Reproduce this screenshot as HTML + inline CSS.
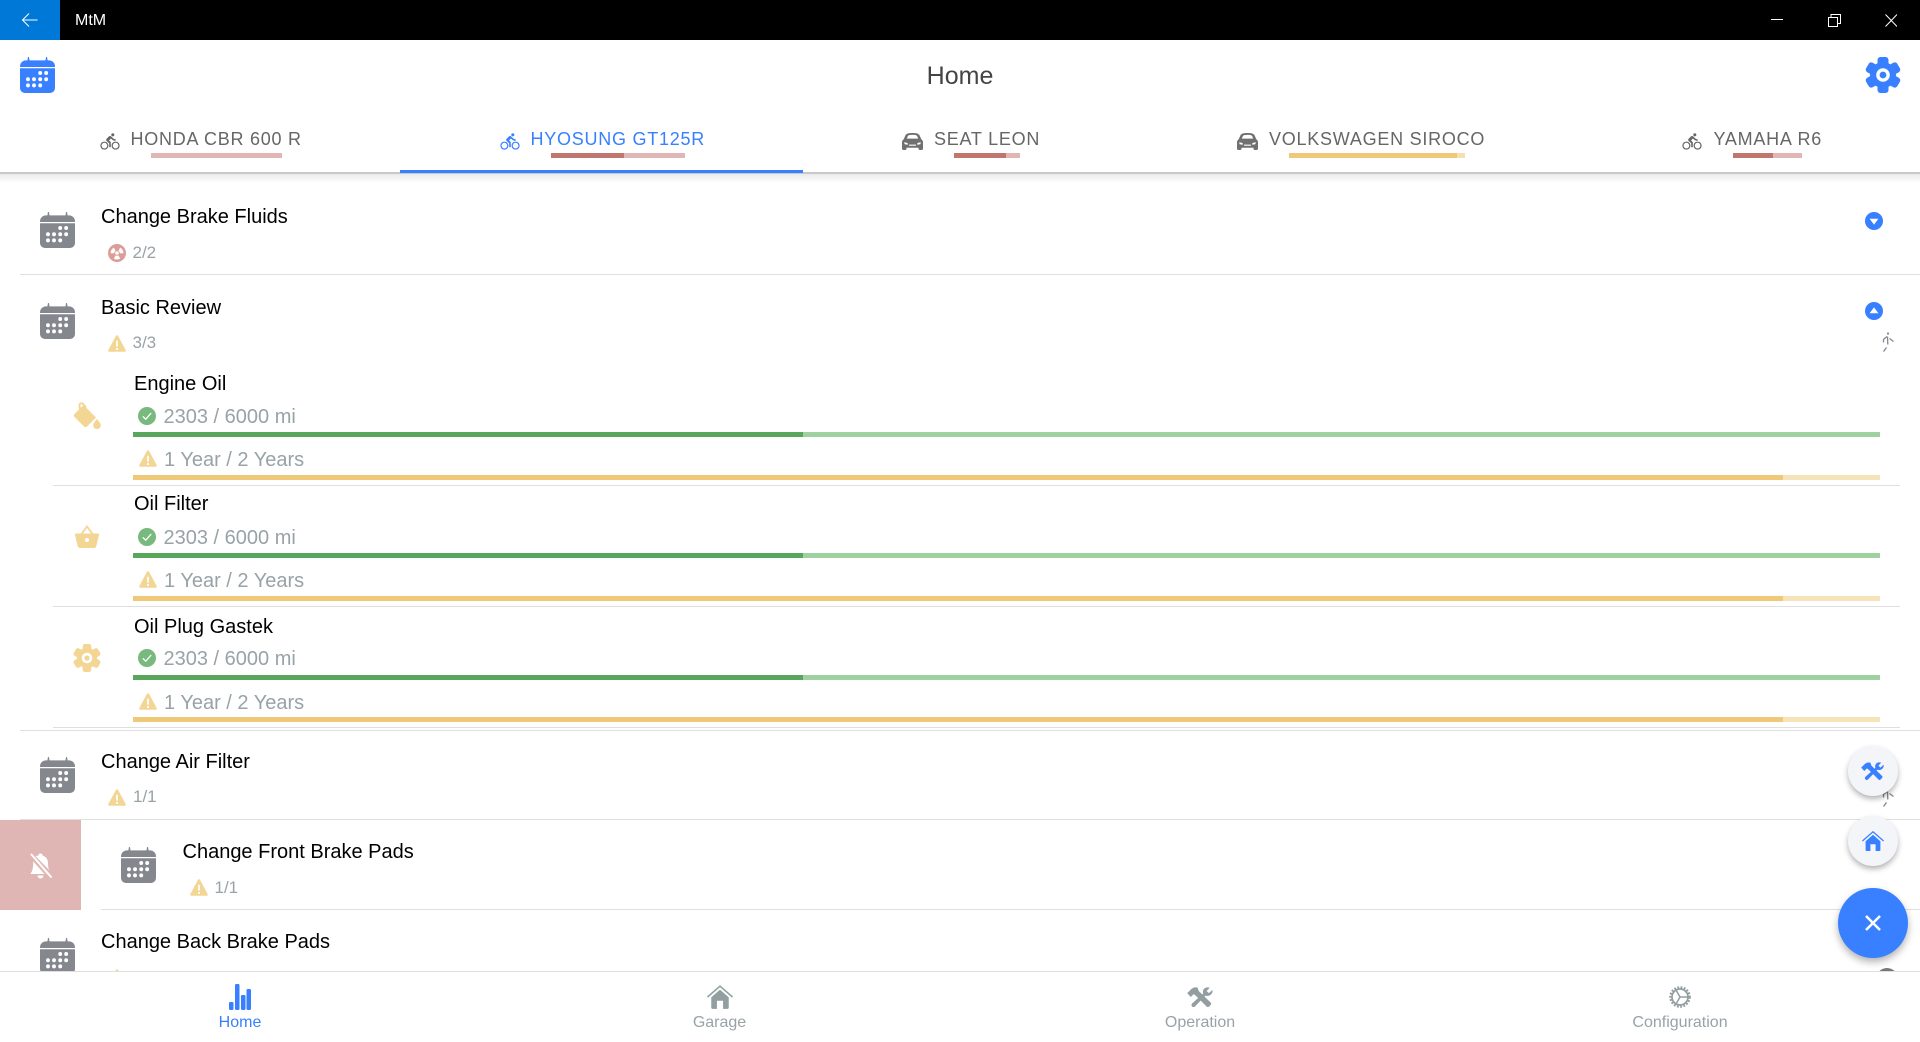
<!DOCTYPE html>
<html lang="en">
<head>
<meta charset="utf-8">
<title>MtM</title>
<style>
html,body{margin:0;padding:0;background:#fff}
body{width:1920px;height:1042px;position:relative;overflow:hidden;font-family:"Liberation Sans",Arial,sans-serif;color:#000;filter:blur(.3px)}
.a,.t,svg.i{position:absolute}
.t{white-space:nowrap;line-height:30px;height:30px}
.h{font-size:20px;color:#000}
.s{font-size:20px;color:#98a3a7}
.n{font-size:17px;color:#98a3a7}
.tab{font-size:18px;letter-spacing:.75px;color:#666}
.nav{font-size:16px;color:#98a3a7;transform:translateX(-50%)}
.sep{position:absolute;height:1px;background:#dfdfdf}
.cal{color:#85878e}
.y{color:#f3d594}
</style>
</head>
<body>
<svg width="0" height="0" style="position:absolute">
<defs>
<symbol id="cal" viewBox="0 0 36 36" preserveAspectRatio="none">
<path fill="currentColor" d="M6 3.4h1.6L8.2 0h1L9.8 3.4H26.2L26.800 0h1L28.400 3.4H30a6 6 0 0 1 6 6V10H0V9.4a6 6 0 0 1 6-6Z"/>
<path fill="currentColor" d="M0 11.2H36V31a5 5 0 0 1-5 5H5a5 5 0 0 1-5-5Z"/>
<g fill="#fff"><circle cx="20.800" cy="16" r="2"/><circle cx="26.900" cy="16" r="2"/><circle cx="8.200" cy="22.200" r="2"/><circle cx="14.400" cy="22.200" r="2"/><circle cx="20.800" cy="22.200" r="2"/><circle cx="26.900" cy="22.200" r="2"/><circle cx="8.200" cy="28.400" r="2"/><circle cx="14.400" cy="28.400" r="2"/><circle cx="20.800" cy="28.400" r="2"/></g>
</symbol>
<symbol id="gear" viewBox="0 0 36 36">
<g fill="currentColor"><circle cx="18" cy="18" r="13"/><rect x="12.500" y="0" width="11" height="36" rx="3"/><rect x="12.500" y="0" width="11" height="36" rx="3" transform="rotate(60 18 18)"/><rect x="12.500" y="0" width="11" height="36" rx="3" transform="rotate(120 18 18)"/></g>
<circle cx="18" cy="18" r="6.800" fill="#fff"/><circle cx="18" cy="18" r="3.400" fill="currentColor"/>
</symbol>
<symbol id="bike" viewBox="0 0 24 22.500">
<path fill="currentColor" d="M15.500 5.500c1.100 0 2-.9 2-2s-.9-2-2-2-2 .9-2 2 .9 2 2 2zM5 12c-2.800 0-5 2.200-5 5s2.200 5 5 5 5-2.200 5-5-2.200-5-5-5zm0 8.500c-1.900 0-3.500-1.600-3.500-3.500s1.600-3.500 3.500-3.500 3.500 1.600 3.500 3.500-1.600 3.500-3.500 3.500zm5.800-10l2.400-2.400.8.800c1.300 1.300 3 2.100 5.100 2.100V9c-1.500 0-2.700-.6-3.600-1.500l-1.900-1.900c-.5-.4-1-.6-1.600-.6s-1.100.2-1.400.6L7.800 8.400c-.4.400-.6.900-.6 1.400 0 .6.200 1.100.6 1.400L11 14v5h2v-6.200l-2.200-2.300zM19 12c-2.800 0-5 2.200-5 5s2.200 5 5 5 5-2.200 5-5-2.200-5-5-5zm0 8.500c-1.900 0-3.500-1.600-3.500-3.500s1.600-3.500 3.500-3.500 3.500 1.600 3.500 3.500-1.600 3.500-3.500 3.500z"/>
</symbol>
<symbol id="car" viewBox="0 0 21 17">
<path fill="currentColor" fill-rule="evenodd" d="M10.500 0C14.500 0 16.800.6 17.700 2.600L19.300 6.200C20.400 7 21 8 21 9.200V15.500a1.500 1.500 0 0 1-1.500 1.500H18a1.500 1.500 0 0 1-1.500-1.500V14.800H4.500V15.500A1.500 1.500 0 0 1 3 17H1.500A1.500 1.500 0 0 1 0 15.500V9.200C0 8 .6 7 1.700 6.200L3.300 2.600C4.200.6 6.500 0 10.500 0ZM4.800 5.600H16.200L15.200 3.200C14.700 2.200 13.200 1.900 10.500 1.900S6.300 2.200 5.800 3.200ZM2.200 9.200 2.600 11.200 5.800 11.800 5.600 10ZM18.800 9.200 15.400 10 15.200 11.800 18.400 11.200ZM7 11.600V12.800H14V11.600Z"/>
</symbol>
<symbol id="warn" viewBox="0 0 18 17">
<path fill="currentColor" d="M9 .2c.4 0 .8.2 1 .6l7.700 14.300c.4.800-.1 1.700-1 1.700H1.300c-.9 0-1.400-.9-1-1.700L8 .8c.2-.4.600-.6 1-.6Z"/>
<rect x="8.100" y="5.600" width="1.800" height="6.200" rx=".8" fill="#fff"/><circle cx="9" cy="14" r="1.100" fill="#fff"/>
</symbol>
<symbol id="ok" viewBox="0 0 18 18">
<circle cx="9" cy="9" r="9" fill="#78b97e"/><path d="M4.800 9.400 7.800 12.200 13.200 6" fill="none" stroke="#fff" stroke-width="1.300"/>
</symbol>
<symbol id="rad" viewBox="0 0 18 18">
<circle cx="9" cy="9" r="9" fill="#dc9d98"/>
<g fill="#fff"><circle cx="9" cy="9" r="1.800"/><path d="M6.300 9.200H2.600A6.400 6.400 0 0 1 5.800 3.600L7.600 6.800A2.800 2.800 0 0 0 6.300 9.200Z"/><path d="M11.700 9.200H15.400A6.400 6.400 0 0 0 12.200 3.600L10.400 6.800A2.800 2.800 0 0 1 11.700 9.200Z"/><path d="M7.600 11.400 5.800 14.600A6.400 6.400 0 0 0 12.200 14.600L10.400 11.400A2.800 2.800 0 0 1 7.600 11.400Z"/></g>
</symbol>
<symbol id="tools" viewBox="0 0 24 18">
<g fill="currentColor">
<path d="M9.300 0.600C6.500.1 4.400 1 2.800 3L.2 5.600 3.300 9 6 6.400 8 8 17.500 17.500a1.500 1.500 0 0 0 2.200-.1L21 16a1.500 1.500 0 0 0 0-2.100L10.500 3.800Z"/>
<path d="M22.500 2.800 19.500 5.600 17.400 3.700 20.200.8C17.800-.2 15 .8 14.300 3.200c-.3.900-.2 1.900.1 2.700L4.500 14.800a1.800 1.800 0 0 0 2.600 2.600L16.300 7.800c2.600.8 5.300-.4 6.200-2.800.3-.7.300-1.500 0-2.200Z"/>
</g>
</symbol>
<symbol id="home" viewBox="0 0 22 20">
<path fill="none" stroke="currentColor" stroke-width="1.300" d="M.4 10 11 .8 21.600 10"/>
<path fill="currentColor" d="M3.600 10.300 11 3.800 18.400 10.300V19a1 1 0 0 1-1 1H13.600V13.200H8.400V20H4.600a1 1 0 0 1-1-1Z"/>
</symbol>
<symbol id="cfg" viewBox="0 0 22 22">
<circle cx="11" cy="11" r="9.600" fill="none" stroke="currentColor" stroke-width="2.400" stroke-dasharray="1.800 1.450"/>
<circle cx="11" cy="11" r="8" fill="none" stroke="currentColor" stroke-width="1.700"/>
<path d="M11 11 7.400 4.600M11 11 7.400 17.400M11 11H18.800" stroke="currentColor" stroke-width="1.500" fill="none"/>
</symbol>
<symbol id="walk" viewBox="0 0 12 20">
<g fill="none" stroke="currentColor" stroke-width="1.300"><circle cx="6" cy="1.500" r="1.100" fill="currentColor" stroke="none"/><path d="M5 4.500 1.500 7.500 1.500 10.500M5.500 4.500 5.800 12.500M7.500 6.500 11.500 9.500"/><path d="M4.500 15.500 1.500 19.500"/></g>
</symbol>
</defs>
</svg>

<!-- title bar -->
<div class="a" style="left:0;top:0;width:1920px;height:40px;background:#000"></div>
<div class="a" style="left:0;top:0;width:60px;height:40px;background:#0078d7"></div>
<svg class="i" style="left:21px;top:12px" width="17" height="16" viewBox="0 0 17 16"><path d="M8 1.500 1.500 8 8 14.500M1.500 8H16.500" fill="none" stroke="#fff" stroke-width="1"/></svg>
<div class="t" style="left:75px;top:6px;font-size:16px;color:#fff">MtM</div>
<svg class="i" style="left:1771px;top:14px" width="126" height="13" viewBox="0 0 126 13"><path d="M0 5.500H12" stroke="#fff" stroke-width="1"/><path d="M57.500 3.500H66.500V12.500H57.500ZM60 3.500V.5H69.500V9.500H66.500" fill="none" stroke="#fff" stroke-width="1"/><path d="M114.500.5 126 12.500M126 .5 114.500 12.500" stroke="#fff" stroke-width="1"/></svg>

<!-- header -->
<svg class="i" style="left:20px;top:57px;color:#3880ff" width="35" height="36"><use href="#cal" width="35" height="36"/></svg>
<div class="t" style="left:860px;width:200px;top:61px;text-align:center;font-size:25px;color:#444">Home</div>
<svg class="i" style="left:1865px;top:57px;color:#3880ff" width="36" height="36"><use href="#gear"/></svg>

<!-- tabs -->
<div class="a" style="left:0;top:172px;width:1920px;height:2px;background:#c9c9c9"></div>
<div class="a" style="left:0;top:174px;width:1920px;height:9px;background:linear-gradient(#eaeaea,#fff)"></div>
<div class="a" style="left:400px;top:170px;width:403px;height:3px;background:#3880ff"></div>

<svg class="i" style="left:100px;top:132px;color:#666" width="20" height="18"><use href="#bike"/></svg>
<div class="t tab" style="left:130.500px;top:124px">HONDA CBR 600 R</div>
<div class="a" style="left:151px;top:153px;width:131px;height:5px;background:#dfb6b3"></div>

<svg class="i" style="left:500px;top:132px;color:#3880ff" width="20" height="18"><use href="#bike"/></svg>
<div class="t tab" style="left:530.500px;top:124px;color:#3880ff">HYOSUNG GT125R</div>
<div class="a" style="left:551px;top:153px;width:134px;height:5px;background:#dfb6b3"></div>
<div class="a" style="left:551px;top:153px;width:73px;height:5px;background:#c0756f"></div>

<svg class="i" style="left:902px;top:133px;color:#707070" width="21" height="17"><use href="#car"/></svg>
<div class="t tab" style="left:934px;top:124px">SEAT LEON</div>
<div class="a" style="left:954px;top:153px;width:66px;height:5px;background:#dfb6b3"></div>
<div class="a" style="left:954px;top:153px;width:52px;height:5px;background:#c0756f"></div>

<svg class="i" style="left:1237px;top:133px;color:#707070" width="21" height="17"><use href="#car"/></svg>
<div class="t tab" style="left:1269px;top:124px">VOLKSWAGEN SIROCO</div>
<div class="a" style="left:1289px;top:153px;width:176px;height:5px;background:#f6e0b0"></div>
<div class="a" style="left:1289px;top:153px;width:168px;height:5px;background:#efc878"></div>

<svg class="i" style="left:1682px;top:132px;color:#666" width="20" height="18"><use href="#bike"/></svg>
<div class="t tab" style="left:1713.500px;top:124px">YAMAHA R6</div>
<div class="a" style="left:1733px;top:153px;width:69px;height:5px;background:#dfb6b3"></div>
<div class="a" style="left:1733px;top:153px;width:40px;height:5px;background:#c0756f"></div>

<!-- item 1 -->
<svg class="i cal" style="left:40px;top:212px" width="35" height="36"><use href="#cal" width="35" height="36"/></svg>
<div class="t h" style="left:101px;top:202px">Change Brake Fluids</div>
<svg class="i" style="left:108px;top:244px" width="18" height="18"><use href="#rad"/></svg>
<div class="t n" style="left:132.500px;top:238px">2/2</div>
<svg class="i" style="left:1865px;top:212px" width="18" height="18" viewBox="0 0 18 18"><circle cx="9" cy="9" r="9" fill="#3880ff"/><path d="M4.600 6.800H13.400L9 12.600Z" fill="#fff"/></svg>
<div class="sep" style="left:20px;top:274px;width:1900px"></div>

<!-- item 2 -->
<svg class="i cal" style="left:40px;top:303px" width="35" height="36"><use href="#cal" width="35" height="36"/></svg>
<div class="t h" style="left:101px;top:293px">Basic Review</div>
<svg class="i y" style="left:108px;top:335px" width="18" height="17"><use href="#warn"/></svg>
<div class="t n" style="left:132.500px;top:328px">3/3</div>
<svg class="i" style="left:1865px;top:302px" width="18" height="18" viewBox="0 0 18 18"><circle cx="9" cy="9" r="9" fill="#3880ff"/><path d="M4.600 11.200H13.400L9 5.400Z" fill="#fff"/></svg>
<svg class="i" style="left:1882px;top:332px;color:#85878e" width="12" height="20"><use href="#walk"/></svg>

<!-- engine oil -->
<svg class="i y" style="left:73px;top:402px" width="28" height="27" viewBox="0 0 28 27"><g fill="currentColor"><path d="M1.500 12 10.500 3 23 15.500 14 24.500a2 2 0 0 1-2.800.1L1.300 14.700a2 2 0 0 1 .2-2.700Z"/><path d="M24 17c1.800 2.400 3.800 4.200 3.800 6.300a3.800 3.800 0 0 1-7.600 0c0-2.100 2-3.900 3.800-6.300Z"/></g><path d="M7 8 6.500 3.600A2 2 0 0 1 10 2L13 5.500" fill="none" stroke="currentColor" stroke-width="2"/></svg>
<div class="t h" style="left:134px;top:369px">Engine Oil</div>
<svg class="i" style="left:138px;top:407px" width="18" height="18"><use href="#ok"/></svg>
<div class="t s" style="left:163.500px;top:402px">2303 / 6000 mi</div>
<div class="a" style="left:133px;top:432px;width:1747px;height:5px;background:#9fd09f"></div>
<div class="a" style="left:133px;top:432px;width:670px;height:5px;background:#57a65a"></div>
<svg class="i y" style="left:139px;top:450px" width="18" height="17"><use href="#warn"/></svg>
<div class="t s" style="left:164px;top:444.500px">1 Year / 2 Years</div>
<div class="a" style="left:133px;top:475px;width:1747px;height:5px;background:#f7e3b8"></div>
<div class="a" style="left:133px;top:475px;width:1650px;height:5px;background:#efc878"></div>
<div class="sep" style="left:53px;top:485px;width:1847px"></div>

<!-- oil filter -->
<svg class="i y" style="left:75px;top:525px" width="24" height="23" viewBox="0 0 24 23"><path fill="currentColor" fill-rule="evenodd" d="M1 8.500H23a1 1 0 0 1 1 1.200L21.500 20.500A3 3 0 0 1 18.600 23H5.400A3 3 0 0 1 2.500 20.500L0 9.700A1 1 0 0 1 1 8.500ZM12 13a2 2 0 1 0 0 4 2 2 0 0 0 0-4Z"/><path d="M6.500 9 12 1.500 17.500 9" fill="none" stroke="currentColor" stroke-width="1.800"/></svg>
<div class="t h" style="left:134px;top:489px">Oil Filter</div>
<svg class="i" style="left:138px;top:528px" width="18" height="18"><use href="#ok"/></svg>
<div class="t s" style="left:163.500px;top:523px">2303 / 6000 mi</div>
<div class="a" style="left:133px;top:553px;width:1747px;height:5px;background:#9fd09f"></div>
<div class="a" style="left:133px;top:553px;width:670px;height:5px;background:#57a65a"></div>
<svg class="i y" style="left:139px;top:571px" width="18" height="17"><use href="#warn"/></svg>
<div class="t s" style="left:164px;top:566px">1 Year / 2 Years</div>
<div class="a" style="left:133px;top:596px;width:1747px;height:5px;background:#f7e3b8"></div>
<div class="a" style="left:133px;top:596px;width:1650px;height:5px;background:#efc878"></div>
<div class="sep" style="left:53px;top:606px;width:1847px"></div>

<!-- oil plug -->
<svg class="i y" style="left:73px;top:644px" width="28" height="28"><use href="#gear"/></svg>
<div class="t h" style="left:134px;top:612px">Oil Plug Gastek</div>
<svg class="i" style="left:138px;top:649px" width="18" height="18"><use href="#ok"/></svg>
<div class="t s" style="left:163.500px;top:644px">2303 / 6000 mi</div>
<div class="a" style="left:133px;top:675px;width:1747px;height:5px;background:#9fd09f"></div>
<div class="a" style="left:133px;top:675px;width:670px;height:5px;background:#57a65a"></div>
<svg class="i y" style="left:139px;top:693px" width="18" height="17"><use href="#warn"/></svg>
<div class="t s" style="left:164px;top:687.500px">1 Year / 2 Years</div>
<div class="a" style="left:133px;top:717px;width:1747px;height:5px;background:#f7e3b8"></div>
<div class="a" style="left:133px;top:717px;width:1650px;height:5px;background:#efc878"></div>
<div class="sep" style="left:53px;top:727px;width:1847px"></div>
<div class="sep" style="left:20px;top:730px;width:1900px"></div>

<!-- air filter -->
<svg class="i cal" style="left:40px;top:757px" width="35" height="36"><use href="#cal" width="35" height="36"/></svg>
<div class="t h" style="left:101px;top:747px">Change Air Filter</div>
<svg class="i y" style="left:108px;top:789px" width="18" height="17"><use href="#warn"/></svg>
<div class="t n" style="left:133px;top:782px">1/1</div>
<svg class="i" style="left:1882px;top:787px;color:#85878e" width="12" height="20"><use href="#walk"/></svg>
<div class="sep" style="left:20px;top:819px;width:1900px"></div>

<!-- front brake pads (swiped) -->
<div class="a" style="left:0;top:820px;width:81px;height:90px;background:#dfb6b3"></div>
<svg class="i" style="left:28px;top:851px" width="26" height="28" viewBox="0 0 26 28"><path fill="#fff" d="M12.500 2.500a2 2 0 0 1 2 2c3.600 1 5.500 4 5.500 7.500 0 3 .4 6 1.500 7.500l-14-14.500C8.800 4.800 9.600 4.800 10.500 4.500a2 2 0 0 1 2-2ZM5.200 9 18.800 23H2.600C3 21.500 5.200 20 5.200 12ZM9.500 24.500h6a3 3 0 0 1-6 0Z"/><path d="M3 3 23.500 26.500" stroke="#fff" stroke-width="2"/><path d="M1.500 5 21 27" stroke="#dfb6b3" stroke-width="1.500"/></svg>
<svg class="i cal" style="left:121px;top:847px" width="35" height="36"><use href="#cal" width="35" height="36"/></svg>
<div class="t h" style="left:182.500px;top:837px">Change Front Brake Pads</div>
<svg class="i y" style="left:190px;top:879px" width="18" height="17"><use href="#warn"/></svg>
<div class="t n" style="left:214.500px;top:873px">1/1</div>
<div class="sep" style="left:101px;top:909px;width:1819px"></div>

<!-- back brake pads -->
<svg class="i cal" style="left:40px;top:938px" width="35" height="36"><use href="#cal" width="35" height="36"/></svg>
<div class="t h" style="left:101px;top:927px">Change Back Brake Pads</div>
<svg class="i y" style="left:108px;top:969px" width="18" height="17"><use href="#warn"/></svg>
<div class="a" style="left:1876px;top:968px;width:22px;height:22px;border-radius:50%;background:#777"></div>

<!-- bottom nav -->
<div class="a" style="left:0;top:971px;width:1920px;height:71px;background:#fff;border-top:1px solid #dfdfdf;box-sizing:border-box"></div>
<svg class="i" style="left:229px;top:984px;color:#3880ff" width="22" height="26" viewBox="0 0 22 26"><g fill="currentColor"><rect x="0" y="18" width="4.500" height="8" rx="1.200"/><rect x="6" y="0" width="4.500" height="26" rx="1.200"/><rect x="12" y="11" width="4.500" height="15" rx="1.200"/><rect x="17.500" y="5" width="4.500" height="21" rx="1.200"/></g></svg>
<div class="t nav" style="left:240px;top:1008px;color:#3880ff">Home</div>
<svg class="i" style="left:707px;top:985px;color:#929ea2" width="26" height="24"><use href="#home"/></svg>
<div class="t nav" style="left:719.500px;top:1008px">Garage</div>
<svg class="i" style="left:1187px;top:986px;color:#929ea2" width="27" height="22"><use href="#tools"/></svg>
<div class="t nav" style="left:1200px;top:1008px">Operation</div>
<svg class="i" style="left:1669px;top:986px;color:#929ea2" width="22" height="22"><use href="#cfg"/></svg>
<div class="t nav" style="left:1680px;top:1008px">Configuration</div>

<!-- FABs -->
<div class="a" style="left:1848px;top:746px;width:50px;height:50px;border-radius:50%;background:#f4f5f8;box-shadow:0 3px 6px rgba(0,0,0,.3)"></div>
<svg class="i" style="left:1861px;top:762px;color:#3880ff" width="24" height="18"><use href="#tools"/></svg>
<div class="a" style="left:1848px;top:816px;width:50px;height:50px;border-radius:50%;background:#f4f5f8;box-shadow:0 3px 6px rgba(0,0,0,.3)"></div>
<svg class="i" style="left:1862px;top:831px;color:#3880ff" width="22" height="20"><use href="#home"/></svg>
<div class="a" style="left:1838px;top:888px;width:70px;height:70px;border-radius:50%;background:#3880ff;box-shadow:0 4px 8px rgba(0,0,0,.3)"></div>
<svg class="i" style="left:1865px;top:915px" width="16" height="16" viewBox="0 0 16 16"><path d="M1 1 15 15M15 1 1 15" stroke="#fff" stroke-width="2.500"/></svg>
</body>
</html>
